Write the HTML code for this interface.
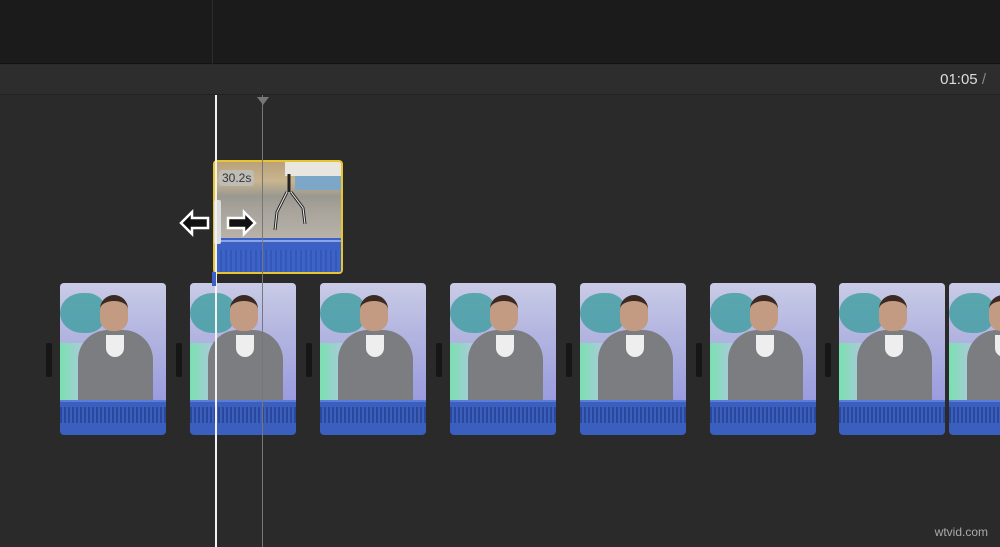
<!DOCTYPE html>
<html><head><style>
*{margin:0;padding:0;box-sizing:border-box}
body{width:1000px;height:547px;background:#2a2a2a;position:relative;overflow:hidden;font-family:"Liberation Sans",sans-serif}
.top{position:absolute;left:0;top:0;width:1000px;height:64px;background:#1b1b1b;border-bottom:1px solid #111}
.div{position:absolute;left:212px;top:0;width:1px;height:64px;background:#2c2c2c}
.bar{position:absolute;left:0;top:65px;width:1000px;height:30px;background:#2d2d2d;border-bottom:1px solid #222}
.time{position:absolute;right:14px;top:71px;color:#ddd;font-size:15px}
.clip{position:absolute;top:283px;width:106px;height:152px;border-radius:4px;overflow:hidden;background:#3b5fbf}
.vid{position:absolute;left:0;top:0;width:106px;height:117px;background:linear-gradient(180deg,#c9cbe6 0%,#b0b2e0 50%,#9a9ce0 100%)}
.wv{position:absolute;left:0;top:10px;width:45px;height:40px;background:#3f9ea0;border-radius:50% 40% 40% 50%;opacity:.8}
.gl{position:absolute;left:0;top:60px;width:25px;height:57px;background:linear-gradient(90deg,#7ae0b0,#b0c8e0)}
.wave{position:absolute;left:0;top:117px;width:106px;height:2px;background:#5a7bd6}
.hood{position:absolute;left:18px;top:47px;width:75px;height:70px;background:#7b7d80;border-radius:30px 30px 0 0}
.shirt{position:absolute;left:46px;top:52px;width:18px;height:22px;background:#eee;border-radius:0 0 9px 9px}
.head{position:absolute;left:40px;top:12px;width:28px;height:36px;background:#c39a82;border-radius:14px 14px 12px 12px;border-top:6px solid #3a2a22}
.aud{position:absolute;left:0;top:124px;width:106px;height:16px;background:repeating-linear-gradient(90deg,#2a479a 0 2px,#3b5fbf 2px 4px)}
.h{position:absolute;top:343px;width:6px;height:34px;background:#161616;border-radius:2px}
</style></head><body>
<div class="top"></div><div class="div"></div>
<div class="bar"></div><div class="time">01:05 <span style="color:#888">/</span></div>

<div class="h" style="left:46px"></div><div class="h" style="left:176px"></div><div class="h" style="left:306px"></div><div class="h" style="left:436px"></div><div class="h" style="left:566px"></div><div class="h" style="left:696px"></div><div class="h" style="left:825px"></div>

<div class="clip" style="left:60px"><div class="vid"><div class="wv"></div><div class="gl"></div><div class="hood"></div><div class="shirt"></div><div class="head"></div></div><div class="wave"></div><div class="aud"></div></div>
<div class="clip" style="left:190px"><div class="vid"><div class="wv"></div><div class="gl"></div><div class="hood"></div><div class="shirt"></div><div class="head"></div></div><div class="wave"></div><div class="aud"></div></div>
<div class="clip" style="left:320px"><div class="vid"><div class="wv"></div><div class="gl"></div><div class="hood"></div><div class="shirt"></div><div class="head"></div></div><div class="wave"></div><div class="aud"></div></div>
<div class="clip" style="left:450px"><div class="vid"><div class="wv"></div><div class="gl"></div><div class="hood"></div><div class="shirt"></div><div class="head"></div></div><div class="wave"></div><div class="aud"></div></div>
<div class="clip" style="left:580px"><div class="vid"><div class="wv"></div><div class="gl"></div><div class="hood"></div><div class="shirt"></div><div class="head"></div></div><div class="wave"></div><div class="aud"></div></div>
<div class="clip" style="left:710px"><div class="vid"><div class="wv"></div><div class="gl"></div><div class="hood"></div><div class="shirt"></div><div class="head"></div></div><div class="wave"></div><div class="aud"></div></div>
<div class="clip" style="left:839px"><div class="vid"><div class="wv"></div><div class="gl"></div><div class="hood"></div><div class="shirt"></div><div class="head"></div></div><div class="wave"></div><div class="aud"></div></div>
<div class="clip" style="left:949px"><div class="vid"><div class="wv"></div><div class="gl"></div><div class="hood"></div><div class="shirt"></div><div class="head"></div></div><div class="wave"></div><div class="aud"></div></div>

<!-- selected clip -->
<div style="position:absolute;left:213px;top:160px;width:130px;height:114px;border:2px solid #e7c531;border-radius:4px;overflow:hidden;background:#3d60c4">
 <div style="position:absolute;left:0;top:0;width:126px;height:76px;background:linear-gradient(180deg,#b9a27a 0%,#c8b48f 25%,#9a9890 45%,#a6a29a 60%,#b8b2a8 100%)"></div>
 <div style="position:absolute;left:70px;top:0;width:56px;height:14px;background:#e8e6de"></div>
 <div style="position:absolute;left:80px;top:14px;width:46px;height:14px;background:#7da7c9"></div>
 <div style="position:absolute;left:4px;top:8px;background:rgba(190,190,190,.85);color:#333;font-size:12px;padding:1px 3px;border-radius:3px">30.2s</div>
 <svg style="position:absolute;left:44px;top:10px" width="50" height="60"><path d="M30 2v18M28 20l-10 20-2 18M32 20l12 16 2 16" stroke="#222" stroke-width="3" fill="none"/><path d="M28 20l-10 20-2 18M32 20l12 16 2 16" stroke="#eee" stroke-width="1" fill="none"/></svg>
 <div style="position:absolute;left:0;top:78px;width:126px;height:2px;background:#8aa4e8"></div>
 <div style="position:absolute;left:0;top:88px;width:126px;height:22px;background:repeating-linear-gradient(90deg,#3358b8 0 2px,#3d62c8 2px 5px)"></div>
</div>
<div style="position:absolute;left:214px;top:200px;width:7px;height:44px;background:#ddd;border-radius:2px"></div>
<svg style="position:absolute;left:178px;top:208px" width="80" height="30">
 <path d="M3 15L14 4v6h16v10H14v6z" fill="#111" stroke="#fff" stroke-width="2.5"/>
 <path d="M77 15L66 4v6H50v10h16v6z" fill="#111" stroke="#fff" stroke-width="2.5"/>
</svg>
<div style="position:absolute;left:215px;top:95px;width:2px;height:452px;background:#f2f2f2"></div>
<div style="position:absolute;left:262px;top:95px;width:1px;height:452px;background:#777"></div>
<div style="position:absolute;left:257px;top:97px;width:0;height:0;border-left:6px solid transparent;border-right:6px solid transparent;border-top:8px solid #777"></div>
<div style="position:absolute;left:212px;top:272px;width:4px;height:14px;background:#3d60c4"></div>
<div style="position:absolute;right:12px;bottom:8px;color:#aaa;font-size:12px">wtvid.com</div>
</body></html>
